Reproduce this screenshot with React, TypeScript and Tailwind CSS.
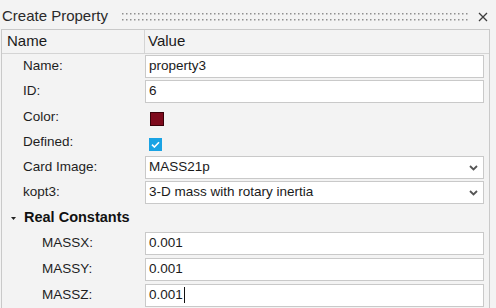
const font = { fontFamily: '"Liberation Sans", Arial, sans-serif' };

function TextField({ value, caret }: { value: string; caret?: boolean }) {
  return (
    <div className="flex h-[23px] flex-1 items-center border border-[#c9c9c9] bg-white px-[3px] text-[13.5px] text-[#1a1a1a]">
      {value}
      {caret && <span className="ml-[1px] inline-block h-[16px] w-px bg-[#111]" />}
    </div>
  );
}

function SelectField({ value }: { value: string }) {
  return (
    <div className="flex h-[23px] flex-1 items-center justify-between border border-[#c9c9c9] bg-white pl-[3px] pr-[4px] text-[13.5px] text-[#1a1a1a]">
      <span>{value}</span>
      <svg width="9" height="6" viewBox="0 0 9 6" className="mr-[1px]">
        <path d="M1 1 L4.5 4.5 L8 1" fill="none" stroke="#555" strokeWidth="1.8" />
      </svg>
    </div>
  );
}

function Row({
  label,
  indent = "pl-[21px]",
  h = "h-[25px]",
  children,
}: {
  label: string;
  indent?: string;
  h?: string;
  children: React.ReactNode;
}) {
  return (
    <div className={`grid grid-cols-[143px_1fr] ${h}`}>
      <div className={`flex items-center ${indent} text-[13.5px] text-[#1e1e1e]`}>{label}</div>
      <div className="flex items-center pr-[5px]">{children}</div>
    </div>
  );
}

export default function App() {
  return (
    <div className="h-[308px] w-[496px] overflow-hidden bg-[#f3f3f3]" style={font}>
      <div className="flex h-[29px] items-center pl-[2px] pr-[8px] pt-[4px]">
        <span className="text-[15px] text-[#2a2a2a]">Create Property</span>
        <svg className="ml-[14px] mr-[9px] h-[8px] flex-1" height="8">
          <defs>
            <pattern id="grip" width="4" height="6" patternUnits="userSpaceOnUse">
              <rect x="0" y="0" width="1.5" height="1.5" fill="#8f8f8f" />
            </pattern>
          </defs>
          <rect x="0" y="0" width="100%" height="8" fill="url(#grip)" />
        </svg>
        <svg width="10" height="10" viewBox="0 0 10 10">
          <path d="M1 1 L9 9 M9 1 L1 9" stroke="#3c3c3c" strokeWidth="1.3" />
        </svg>
      </div>

      <div className="ml-[1px] w-[489px] border-x border-t border-[#c9c9c9]">
        <div className="grid h-[24px] grid-cols-[143px_1fr] border-b border-[#d4d4d4] text-[15px] text-[#1a1a1a]">
          <div className="flex items-center border-r border-[#d4d4d4] pl-[5px]">Name</div>
          <div className="flex items-center pl-[3px]">Value</div>
        </div>

        <Row label="Name:">
          <TextField value="property3" />
        </Row>
        <Row label="ID:">
          <TextField value="6" />
        </Row>
        <Row label="Color:" h="h-[26px]">
          <div className="ml-[5px] mt-[3px] h-[14px] w-[14px] border border-[#3a0008] bg-[#7e0a1c]" />
        </Row>
        <Row label="Defined:">
          <div className="ml-[4px] mt-[3px] flex h-[13px] w-[13px] items-center justify-center bg-[#1aa3e4]">
            <svg width="9" height="7" viewBox="0 0 9 7">
              <path d="M1 3.6 L3.4 6 L8 1.2" fill="none" stroke="white" strokeWidth="1.6" />
            </svg>
          </div>
        </Row>
        <Row label="Card Image:">
          <SelectField value="MASS21p" />
        </Row>
        <Row label="kopt3:">
          <SelectField value="3-D mass with rotary inertia" />
        </Row>
        <div className="flex h-[26px] items-center pl-[9px] text-[14.5px] font-bold text-[#111]">
          <svg width="5" height="3" viewBox="0 0 5 3" className="mr-[8px]">
            <path d="M0 0 L5 0 L2.5 3 Z" fill="#222" />
          </svg>
          Real Constants
        </div>
        <Row label="MASSX:" indent="pl-[40px]">
          <TextField value="0.001" />
        </Row>
        <Row label="MASSY:" indent="pl-[40px]" h="h-[26px]">
          <TextField value="0.001" />
        </Row>
        <Row label="MASSZ:" indent="pl-[40px]" h="h-[26px]">
          <TextField value="0.001" caret />
        </Row>
      </div>
    </div>
  );
}
